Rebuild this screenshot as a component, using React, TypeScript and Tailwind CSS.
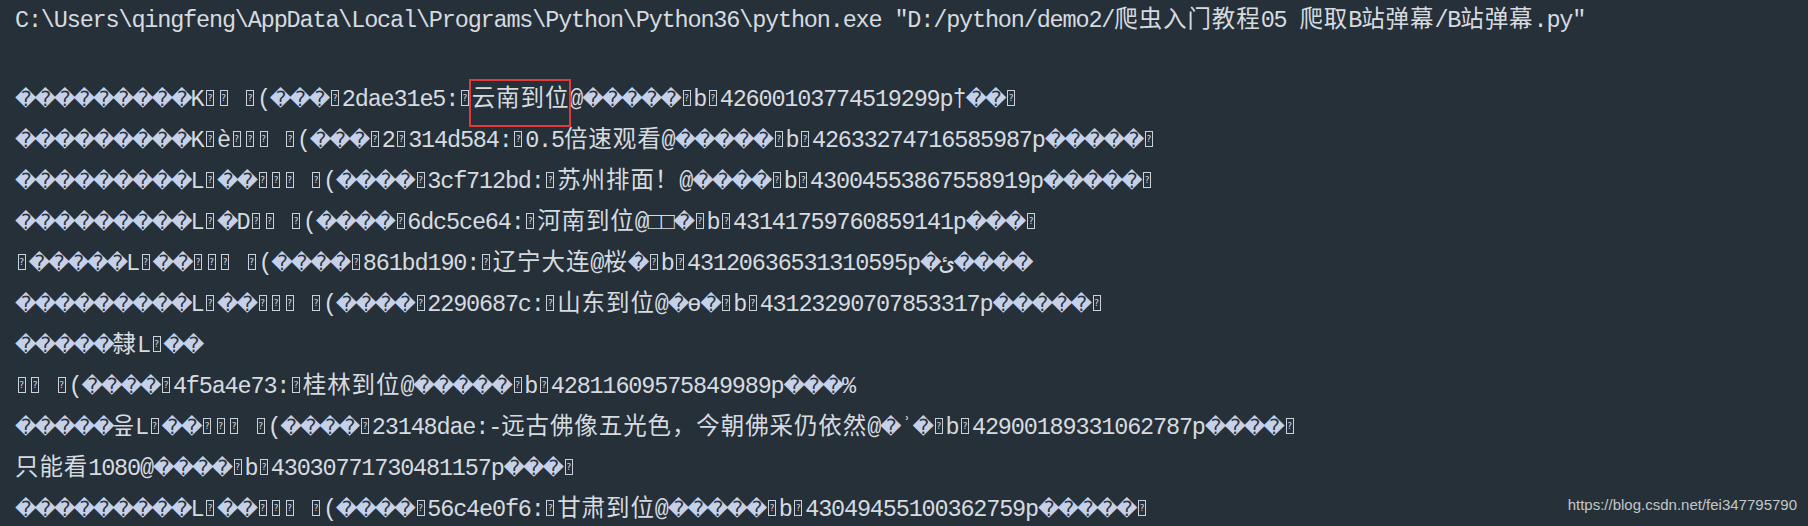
import React from "react";

const CJK = /[\u2E80-\u9FFF\uAC00-\uD7AF\uFF00-\uFFEF\u3000-\u303F]/;

const header =
  'C:\\Users\\qingfeng\\AppData\\Local\\Programs\\Python\\Python36\\python.exe "D:/python/demo2/爬虫入门教程05 爬取B站弹幕/B站弹幕.py"';

// ▯ = unprintable byte box, � = replacement char, [..] = boxed run
const lines = [
  "���������K▯▯ ▯(���▯2dae31e5:▯[云南到位]@�����▯b▯42600103774519299p†��▯",
  "���������K▯è▯▯▯ ▯(���▯2▯314d584:▯0.5倍速观看@�����▯b▯42633274716585987p�����▯",
  "���������L▯��▯▯▯ ▯(����▯3cf712bd:▯苏州排面！@����▯b▯43004553867558919p�����▯",
  "���������L▯�D▯▯ ▯(����▯6dc5ce64:▯河南到位@□□�▯b▯43141759760859141p���▯",
  "▯�����L▯��▯▯▯ ▯(����▯861bd190:▯辽宁大连@桜�▯b▯43120636531310595p�ئ����",
  "���������L▯��▯▯▯ ▯(����▯2290687c:▯山东到位@�ɵ�▯b▯43123290707853317p�����▯",
  "�����隸L▯��",
  "▯▯ ▯(����▯4f5a4e73:▯桂林到位@�����▯b▯42811609575849989p���%",
  "�����읖L▯��▯▯▯ ▯(����▯23148dae:-远古佛像五光色，今朝佛采仍依然@�ʾ�▯b▯42900189331062787p����▯",
  "只能看1080@����▯b▯43030771730481157p���▯",
  "���������L▯��▯▯▯ ▯(����▯56c4e0f6:▯甘肃到位@�����▯b▯43049455100362759p�����▯",
];

const Line = ({ text }: { text: string }) => {
  const out: any[] = [];
  let buf = "";
  let mode = "";
  let boxed = false;
  const flush = () => {
    if (!buf) return;
    if (mode === "c" && boxed) {
      out.push(
        <span key={out.length} className="relative inline-block h-[41px] tracking-[0.9px]">
          {buf}
          <span className="absolute -left-[3px] -right-[2px] top-0 h-[48px] border-2 border-[#e23a3a]" />
        </span>
      );
    } else if (mode === "c") {
      out.push(
        <span key={out.length} className="tracking-[0.9px]">
          {buf}
        </span>
      );
    } else {
      out.push(<span key={out.length}>{buf}</span>);
    }
    buf = "";
  };
  for (const ch of Array.from(text)) {
    if (ch === "[" || ch === "]") {
      flush();
      boxed = ch === "[";
      mode = "";
    } else if (ch === "�") {
      flush();
      out.push(
        <span
          key={out.length}
          className="inline-block w-[19.5px] text-center tracking-normal text-[21px] text-[#c6d1e8] font-['DejaVu_Sans',sans-serif]"
        >
          {ch}
        </span>
      );
      mode = "";
    } else if (ch === "▯") {
      flush();
      out.push(
        <span
          key={out.length}
          className="inline-block overflow-hidden align-baseline w-[8px] h-[16px] mx-[2.75px] border border-[#c9d1dc] text-[9px] leading-[14px] text-center tracking-normal font-['DejaVu_Sans',sans-serif]"
        >
          ?
        </span>
      );
      mode = "";
    } else {
      const t = CJK.test(ch) ? "c" : "l";
      if (t !== mode) {
        flush();
        mode = t;
      }
      buf += ch;
    }
  }
  flush();
  return <>{out}</>;
};

export default function App() {
  return (
    <div className="relative w-[1808px] h-[526px] overflow-hidden bg-[#263038] text-[#d6dbe0] pl-[15px] text-[23.5px] leading-[41px] tracking-[-1.17px] whitespace-pre font-['Liberation_Mono','Noto_Sans_CJK_SC',monospace]">
      <div className="h-[41px]">
        <Line text={header} />
      </div>
      <div className="mt-[38px] flex flex-col">
        {lines.map((l, i) => (
          <div key={i} className="h-[41px]">
            <Line text={l} />
          </div>
        ))}
      </div>
      <div className="absolute right-[11px] top-[494px] text-[15px] leading-[22px] tracking-normal text-[#c3c7cb] font-['Liberation_Sans',Arial,sans-serif]">
        https://blog.csdn.net/fei347795790
      </div>
    </div>
  );
}
